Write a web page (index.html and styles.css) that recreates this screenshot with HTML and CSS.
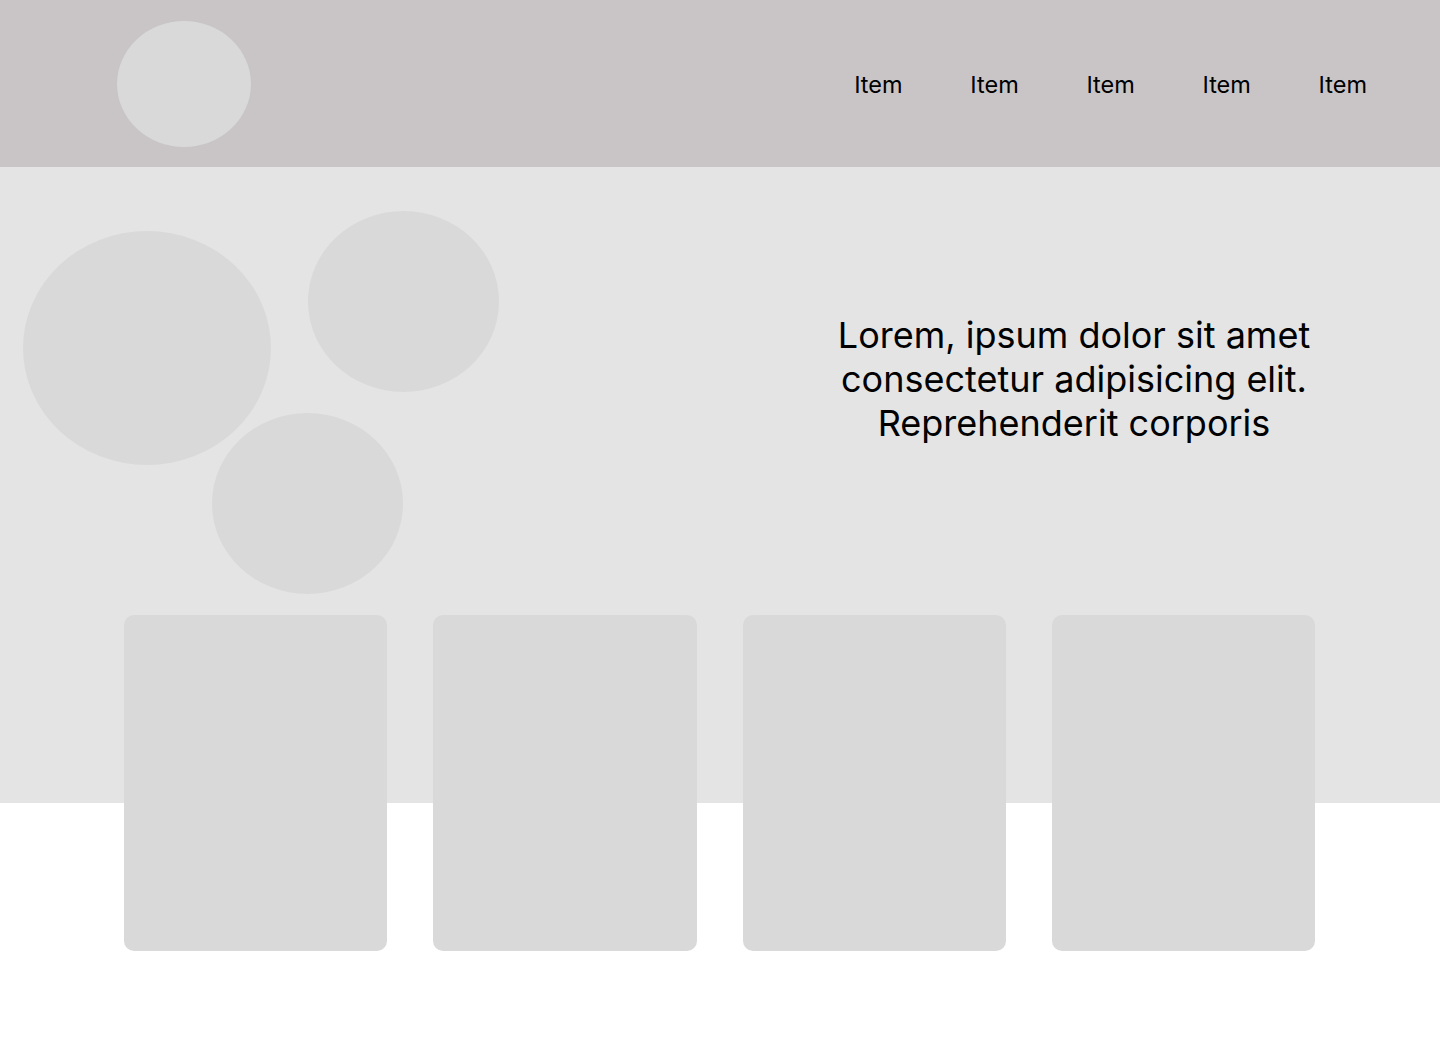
FILE: index.html
```html
<!DOCTYPE html>
<html lang="en">
<head>
<meta charset="utf-8">
<title>Wireframe</title>
<link rel="stylesheet" href="styles.css">
</head>
<body>
<header class="topbar">
  <div class="logo"></div>
  <nav class="nav">
    <a class="nav-item">Item</a>
    <a class="nav-item">Item</a>
    <a class="nav-item">Item</a>
    <a class="nav-item">Item</a>
    <a class="nav-item">Item</a>
  </nav>
</header>
<section class="hero">
  <div class="bubbles">
    <span class="bubble bubble-a"></span>
    <span class="bubble bubble-b"></span>
    <span class="bubble bubble-c"></span>
  </div>
  <div class="hero-copy">
    <p class="hero-text">Lorem, ipsum dolor sit amet consectetur adipisicing elit. Reprehenderit corporis</p>
  </div>
</section>
<section class="cards">
  <div class="card"></div>
  <div class="card"></div>
  <div class="card"></div>
  <div class="card"></div>
</section>
</body>
</html>
```
FILE: styles.css
```css
* { box-sizing: border-box; }
html, body {
  margin: 0;
  padding: 0;
  background: #ffffff;
  font-family: Inter, "Noto Sans", sans-serif;
  color: #000;
}
.topbar {
  height: 167px;
  background: #c9c5c6;
  display: flex;
  align-items: center;
  justify-content: space-between;
  padding: 0 73px 0 117px;
}
.logo {
  width: 134px;
  height: 126px;
  border-radius: 50%;
  background: #d9d9d9;
}
.nav {
  display: flex;
  gap: 67.7px;
  align-items: center;
  padding-top: 3px;
}
.nav-item {
  font-size: 23.5px;
  line-height: 28px;
  color: #000;
  text-decoration: none;
}
.hero {
  height: 636px;
  background: #e4e4e4;
  display: flex;
}
.bubbles {
  position: relative;
  width: 520px;
  flex: none;
}
.bubble {
  position: absolute;
  background: #d9d9d9;
  border-radius: 50%;
}
.bubble-a { left: 23px; top: 64px; width: 248px; height: 234px; }
.bubble-b { left: 308px; top: 44px; width: 191px; height: 181px; }
.bubble-c { left: 212px; top: 246px; width: 191px; height: 181px; }
.hero-copy {
  flex: 1;
  display: flex;
  justify-content: center;
  padding: 146px 0 0 188px;
}
.hero-text {
  margin: 0;
  width: 520px;
  font-size: 36px;
  line-height: 44px;
  text-align: center;
}
.cards {
  display: grid;
  grid-template-columns: repeat(4, 1fr);
  gap: 46px;
  margin: -188px 125px 0 124px;
  padding-bottom: 103px;
}
.card {
  height: 336px;
  background: #d9d9d9;
  border-radius: 10px;
}
```
